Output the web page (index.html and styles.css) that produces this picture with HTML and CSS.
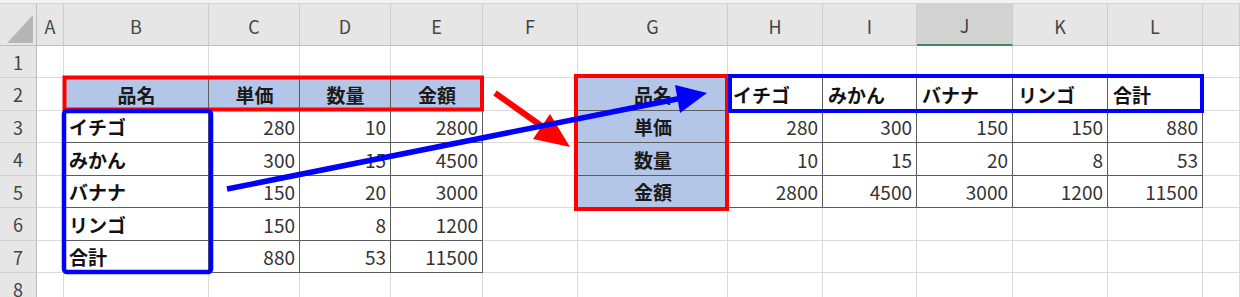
FILE: index.html
```html
<!DOCTYPE html>
<html lang="ja">
<head>
  <meta charset="UTF-8">
  <meta name="viewport" content="width=device-width, initial-scale=1.0">
  <title>行列の入れ替え</title>
  <link rel="stylesheet" href="styles.css">
</head>
<body>
  <div class="page">
    <div class="strip"></div>
    <div class="sheet">
      <!-- column headers -->
      <div class="corner">
        <svg width="26" height="28" viewBox="0 0 26 28"><polygon points="26,0 26,28 0,28" fill="#b5b5b5"/></svg>
      </div>
      <div class="col">A</div>
      <div class="col">B</div>
      <div class="col">C</div>
      <div class="col">D</div>
      <div class="col">E</div>
      <div class="col">F</div>
      <div class="col">G</div>
      <div class="col">H</div>
      <div class="col">I</div>
      <div class="col sel">J</div>
      <div class="col">K</div>
      <div class="col">L</div>
      <div class="col"></div>

      <!-- row 1 -->
      <div class="rh">1</div>
      <div class="c"></div><div class="c"></div><div class="c"></div><div class="c"></div>
      <div class="c"></div><div class="c"></div><div class="c"></div><div class="c"></div>
      <div class="c"></div><div class="c"></div><div class="c"></div><div class="c"></div>
      <div class="c"></div>

      <!-- row 2 -->
      <div class="rh">2</div>
      <div class="c"></div>
      <div class="c t hd">品名</div>
      <div class="c t hd">単価</div>
      <div class="c t hd">数量</div>
      <div class="c t hd">金額</div>
      <div class="c"></div>
      <div class="c t hd">品名</div>
      <div class="c t lbl">イチゴ</div>
      <div class="c t lbl">みかん</div>
      <div class="c t lbl">バナナ</div>
      <div class="c t lbl">リンゴ</div>
      <div class="c t lbl">合計</div>
      <div class="c"></div>

      <!-- row 3 -->
      <div class="rh">3</div>
      <div class="c"></div>
      <div class="c t lbl">イチゴ</div>
      <div class="c t num">280</div>
      <div class="c t num">10</div>
      <div class="c t num">2800</div>
      <div class="c"></div>
      <div class="c t hd">単価</div>
      <div class="c t num">280</div>
      <div class="c t num">300</div>
      <div class="c t num">150</div>
      <div class="c t num">150</div>
      <div class="c t num">880</div>
      <div class="c"></div>

      <!-- row 4 -->
      <div class="rh">4</div>
      <div class="c"></div>
      <div class="c t lbl">みかん</div>
      <div class="c t num">300</div>
      <div class="c t num">15</div>
      <div class="c t num">4500</div>
      <div class="c"></div>
      <div class="c t hd">数量</div>
      <div class="c t num">10</div>
      <div class="c t num">15</div>
      <div class="c t num">20</div>
      <div class="c t num">8</div>
      <div class="c t num">53</div>
      <div class="c"></div>

      <!-- row 5 -->
      <div class="rh">5</div>
      <div class="c"></div>
      <div class="c t lbl">バナナ</div>
      <div class="c t num">150</div>
      <div class="c t num">20</div>
      <div class="c t num">3000</div>
      <div class="c"></div>
      <div class="c t hd">金額</div>
      <div class="c t num">2800</div>
      <div class="c t num">4500</div>
      <div class="c t num">3000</div>
      <div class="c t num">1200</div>
      <div class="c t num">11500</div>
      <div class="c"></div>

      <!-- row 6 -->
      <div class="rh">6</div>
      <div class="c"></div>
      <div class="c t lbl">リンゴ</div>
      <div class="c t num">150</div>
      <div class="c t num">8</div>
      <div class="c t num">1200</div>
      <div class="c"></div><div class="c"></div><div class="c"></div><div class="c"></div>
      <div class="c"></div><div class="c"></div><div class="c"></div><div class="c"></div>

      <!-- row 7 -->
      <div class="rh">7</div>
      <div class="c"></div>
      <div class="c t lbl">合計</div>
      <div class="c t num">880</div>
      <div class="c t num">53</div>
      <div class="c t num">11500</div>
      <div class="c"></div><div class="c"></div><div class="c"></div><div class="c"></div>
      <div class="c"></div><div class="c"></div><div class="c"></div><div class="c"></div>

      <!-- row 8 -->
      <div class="rh">8</div>
      <div class="c"></div><div class="c"></div><div class="c"></div><div class="c"></div>
      <div class="c"></div><div class="c"></div><div class="c"></div><div class="c"></div>
      <div class="c"></div><div class="c"></div><div class="c"></div><div class="c"></div>
      <div class="c"></div>
    </div>

    <!-- highlight boxes and arrows drawn over the sheet -->
    <svg class="marks" width="1240" height="297" viewBox="0 0 1240 297">
      <rect x="64.5" y="77.5" width="417.5" height="32" fill="none" stroke="#f00" stroke-width="4"/>
      <rect x="576" y="76" width="151" height="133" fill="none" stroke="#f00" stroke-width="4"/>
      <line x1="495" y1="93" x2="550" y2="132" stroke="#f00" stroke-width="6"/>
      <polygon points="570,147 533,139 550,114" fill="#f00"/>

      <rect x="64" y="111" width="147" height="161" rx="3" fill="none" stroke="#00f" stroke-width="4.5"/>
      <rect x="730" y="76" width="472" height="35" fill="none" stroke="#00f" stroke-width="4"/>
      <line x1="227" y1="189" x2="682" y2="98" stroke="#00f" stroke-width="5.5"/>
      <polygon points="707,93 675,85 680,113" fill="#00f"/>
    </svg>
  </div>
</body>
</html>
```

FILE: styles.css
```css
/* Spreadsheet look */
* {
  box-sizing: border-box;
}

body {
  margin: 0;
  background: #fff;
  overflow: hidden;
  font-family: "Noto Sans CJK JP", "Noto Sans", sans-serif;
}

.page {
  position: relative;
  width: 1240px;
  height: 297px;
  overflow: hidden;
}

.strip {
  height: 4px;
  background: #f2f2f2;
  border-bottom: 1px solid #d4d4d4;
}

.sheet {
  display: grid;
  grid-template-columns: 37px 27px 145px 91px 91px 92px 95px 150px 95px 94px 96px 95px 95px 1fr;
  grid-template-rows: 42px 32px 33px 32px 33px 32px 33px 32px 32px;
}

/* Headers */
.corner {
  display: flex;
  align-items: flex-end;
  justify-content: flex-end;
  padding: 0 3px 2px 0;
  background: #e6e6e6;
  border-right: 1px solid #bdbdbd;
  border-bottom: 1px solid #bdbdbd;
}

.col {
  display: flex;
  align-items: center;
  justify-content: center;
  padding-top: 2px;
  background: #e6e6e6;
  border-right: 1px solid #cdcdcd;
  border-bottom: 1px solid #bdbdbd;
  font-size: 18px;
  color: #444;
}

.col.sel {
  background: #d2d2d2;
  border-bottom: 2px solid #3c8a5e;
}

.rh {
  display: flex;
  align-items: center;
  justify-content: center;
  background: #e6e6e6;
  border-right: 1px solid #bdbdbd;
  border-bottom: 1px solid #d0d0d0;
  font-size: 18px;
  color: #444;
}

/* Cells */
.c {
  display: flex;
  align-items: center;
  padding: 0 4px 0 5px;
  border-right: 1px solid #dadada;
  border-bottom: 1px solid #dadada;
  font-size: 19px;
  white-space: nowrap;
}

/* bordered table cells; the shadow draws the top and left edge */
.t {
  border-color: #5c5c5c;
  box-shadow: -1px -1px 0 #5c5c5c;
}

.hd {
  justify-content: center;
  background: #b4c6e7;
  font-weight: 700;
  color: #1a1a1a;
}

.lbl {
  font-weight: 700;
  color: #111;
}

.num {
  justify-content: flex-end;
  color: #333;
}

.marks {
  position: absolute;
  top: 0;
  left: 0;
  pointer-events: none;
}
```
